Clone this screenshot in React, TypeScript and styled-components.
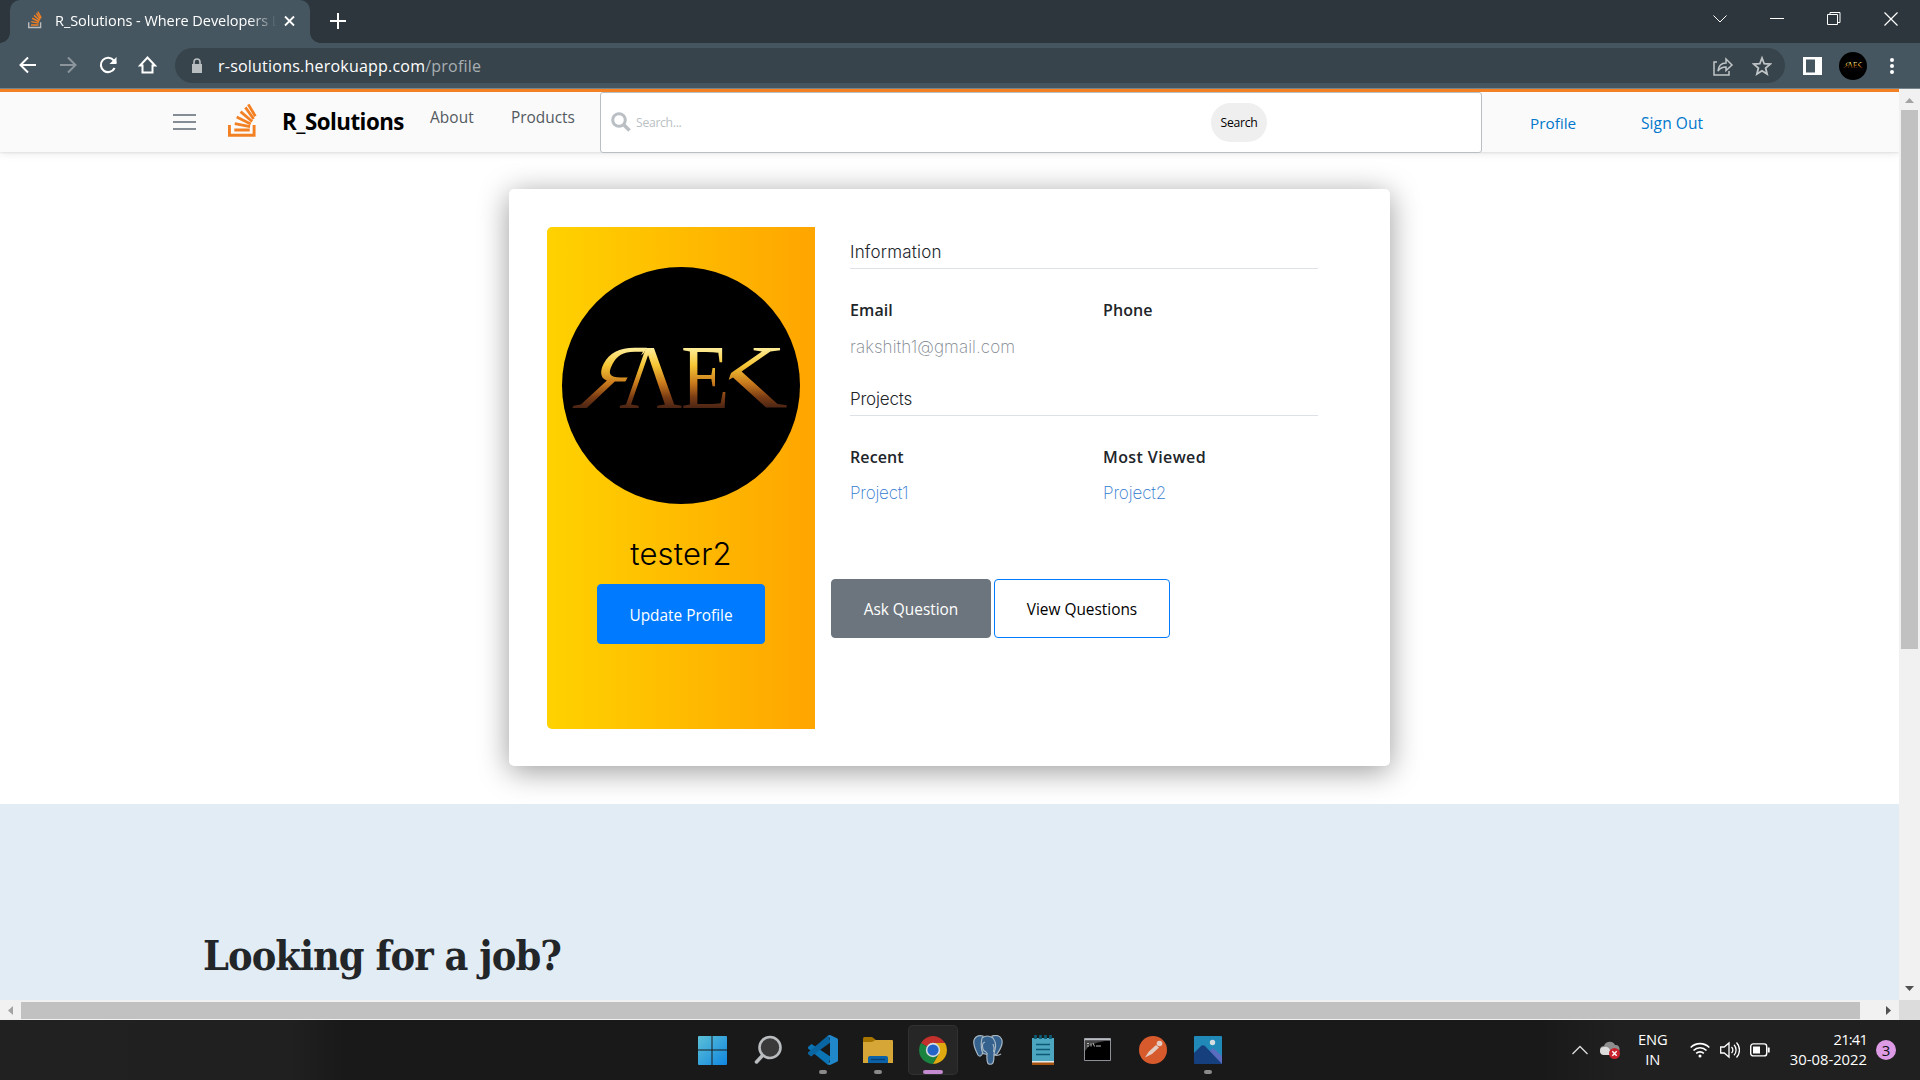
import React from "react";
import styled, { createGlobalStyle } from "styled-components";

const Global = createGlobalStyle`
  *{box-sizing:border-box}
  html,body{margin:0;padding:0}
  body{width:1920px;height:1080px;overflow:hidden;font-family:"Open Sans","Noto Sans",sans-serif;background:#fff}
  svg{display:block;flex:none}
`;

const Screen = styled.div`width:1920px;height:1080px;display:flex;flex-direction:column;overflow:hidden;`;

const Label = styled.span<{ $size: number; $ls?: number; $color?: string; $weight?: number; $family?: string; $gap?: number; $drop?: number }>`
  display:block;flex:none;white-space:pre;
  font-size:${p => p.$size}px;
  line-height:20px;
  letter-spacing:${p => p.$ls ?? 0}px;
  color:${p => p.$color ?? "inherit"};
  font-weight:${p => p.$weight ?? 400};
  font-family:${p => p.$family ?? "inherit"};
  margin-left:${p => p.$gap ?? 0}px;
  margin-top:${p => p.$drop ?? 0}px;
`;

/* browser chrome */
const TabStrip = styled.div`height:43px;flex:none;background:#2c363c;display:flex;`;
const Tab = styled.div`
  position:relative;width:300px;height:43px;margin-left:10px;background:#455660;border-radius:10px 10px 0 0;
  display:flex;padding:11px 15px 0 18px;color:#fff;
  &::before,&::after{content:"";position:absolute;bottom:0;width:10px;height:10px}
  &::before{left:-10px;background:radial-gradient(circle at 0 0,transparent 9.5px,#455660 10px)}
  &::after{right:-10px;background:radial-gradient(circle at 100% 0,transparent 9.5px,#455660 10px)}
`;
const TabTitle = styled.div`
  width:222px;margin-left:13px;
  mask-image:linear-gradient(90deg,#000 194px,transparent 222px);
`;
const TabClose = styled.div`margin:4px 0 0 7px;`;
const NewTab = styled.div`margin:13px 0 0 20px;`;
const WindowControls = styled.div`margin-left:auto;padding:12px 22px 0 0;display:flex;gap:43px;`;

const Toolbar = styled.div`height:46px;flex:none;background:#455660;border-bottom:1px solid #76848b;display:flex;padding-left:18px;`;
const NavIcons = styled.div`display:flex;gap:20px;padding-top:12px;`;
const Omnibox = styled.div`
  width:1610px;height:35px;margin:5px 0 0 17px;border-radius:18px;background:#38444b;color:#fff;
  display:flex;align-items:center;padding:0 13px 0 16px;
`;
const OmniActions = styled.div`margin-left:auto;display:flex;gap:18px;`;
const ToolbarEnd = styled.div`display:flex;align-items:center;height:45px;`;
const MiniAvatar = styled.div`width:28px;height:28px;border-radius:50%;background:#000;margin:0 22px 0 17px;display:flex;align-items:center;justify-content:center;`;

/* page */
const Viewport = styled.div`height:911px;flex:none;display:flex;`;
const Page = styled.div`width:1899px;display:flex;flex-direction:column;overflow:hidden;`;
const Header = styled.header`
  height:63px;flex:none;border-top:3px solid #f48024;background:#fafafa;display:flex;position:relative;
  box-shadow:0 1px 2px rgba(0,0,0,.08),0 2px 8px rgba(0,0,0,.08);
`;
const Burger = styled.div`
  width:23px;margin:22px 0 0 173px;height:16px;display:flex;flex-direction:column;justify-content:space-between;
`;
const BurgerLine = styled.i`height:2px;background:#848d95;`;
const HeaderLogo = styled.div`margin:11px 0 0 32px;width:29px;`;
const Brand = styled.div`width:148px;padding:20px 0 0 25px;`;
const NavLink = styled.div<{ $w: number; $top: number }>`width:${p => p.$w}px;padding-top:${p => p.$top}px;`;
const SearchBox = styled.div`
  width:882px;height:61px;border:1px solid #babfc4;border-radius:3px;background:#fff;
  display:flex;padding-left:10px;flex:none;
`;
const SearchButton = styled.button`
  width:56px;height:39px;margin:10px 0 0 auto;margin-right:214px;border:0;border-radius:20px;background:#efefef;
  padding:0;display:flex;align-items:center;justify-content:center;font-family:inherit;
`;
const SearchGlyph = styled.div`margin-top:19px;`;
const Main = styled.main`height:652px;flex:none;padding:37px 0 0 509px;background:#fff;`;
const Card = styled.section`
  width:881px;height:577px;border-radius:5px;background:#fff;padding:38px;display:flex;
  box-shadow:0 5px 30px rgba(0,0,0,.4);
`;
const Side = styled.div`
  width:268px;height:502px;border-radius:5px 0 0 5px;background:linear-gradient(90deg,#ffd200,#ffa500);
  display:flex;flex-direction:column;align-items:center;padding-top:40px;
`;
const Avatar = styled.div`width:238px;height:237px;border-radius:50%;background:#000;`;
const Name = styled.h3`margin:30px 0 0;height:50px;font:300 31px/39px Inter,sans-serif;letter-spacing:.2px;color:#000;`;
const Button = styled.button<{ $w: number; $h: number; $bg: string; $fg: string; $line?: string }>`
  width:${p => p.$w}px;height:${p => p.$h}px;background:${p => p.$bg};color:${p => p.$fg};
  border:1px solid ${p => p.$line ?? p.$bg};border-radius:4px;padding:2px 0 0;
  display:flex;justify-content:center;align-items:center;font-family:inherit;flex:none;
`;
const Details = styled.div`width:503px;padding:14px 0 0 16px;`;
const Fields = styled.div`padding-left:19px;width:487px;`;
const Heading = styled.div<{ $top?: number }>`height:28px;margin-top:${p => p.$top ?? 0}px;padding-top:1px;border-bottom:1px solid #dee2e6;color:#212529;`;
const Columns = styled.div`display:grid;grid-template-columns:253px 1fr;padding-top:31px;`;
const Actions = styled.div`display:flex;gap:3px;margin-top:75px;`;
const Jobs = styled.section`height:196px;flex:none;background:#e1ecf4;padding:121px 0 0 203px;`;
const JobsTitle = styled.h1`margin:0;font:700 41px/62px "DejaVu Serif Condensed","DejaVu Serif",serif;font-stretch:condensed;letter-spacing:-.95px;color:#232629;white-space:nowrap;`;

const VScroll = styled.div`width:21px;background:#f1f1f1;display:flex;flex-direction:column;align-items:center;padding:9px 0 9px;`;
const VThumb = styled.div`width:17px;height:539px;background:#c1c1c1;margin-top:7px;`;
const HScroll = styled.div`height:20px;flex:none;background:#f1f1f1;display:flex;align-items:center;padding-left:8px;`;
const HThumb = styled.div`width:1839px;height:17px;background:#c1c1c1;margin:1px 26px 0 8px;`;
const Corner = styled.div`width:21px;height:20px;margin-left:auto;background:#dcdcdc;`;
const Push = styled.div`margin-top:auto;`;

/* taskbar */
const Taskbar = styled.footer`
  height:60px;flex:none;background:linear-gradient(90deg,#212121 0,#202020 290px,#191919 345px,#191919 1540px,#202020 1620px);
  display:flex;padding-left:688px;color:#fff;
`;
const TaskItem = styled.div<{ $active?: boolean }>`
  width:50px;height:50px;margin:5px 5px 0 0;border-radius:5px;display:flex;flex-direction:column;align-items:center;
  padding-top:10px;background:${p => (p.$active ? "#262626" : "transparent")};
  box-shadow:${p => (p.$active ? "inset 0 0 0 1px #303030" : "none")};
`;
const Mark = styled.i<{ $active?: boolean }>`
  width:${p => (p.$active ? 20 : 8)}px;height:4px;border-radius:2px;margin-top:5px;background:${p => (p.$active ? "#c58bd0" : "#8a8a8a")};
`;
const Tray = styled.div`margin-left:auto;padding-right:24px;display:flex;align-items:center;`;
const Stack = styled.div<{ $align: string; $gap: number }>`display:flex;flex-direction:column;align-items:${p => p.$align};margin:-2px 0 0 ${p => p.$gap}px;`;
const TrayIcon = styled.div<{ $gap: number }>`margin-left:${p => p.$gap}px;`;
const Count = styled.div`width:20px;height:20px;border-radius:50%;background:#dd9be6;color:#111;display:flex;justify-content:center;margin-left:9px;`;

const StackLogo = ({ w, h, base = "#f48024" }: { w: number; h: number; base?: string }) => (
  <svg width={w} height={h} viewBox="0 0 30 36" preserveAspectRatio="none" fill="none">
    <path d="M1.500 22.500v10.700h25.500V22.500" stroke={base} strokeWidth="3" />
    <g stroke="#f48024" strokeWidth="3">
      <path d="M6.500 27.800h16M7 21.200l15.800 3M9 14.500l14.500 7M13 8.800l12 10.200M18 4.500l8.500 12M21 1.400l7.300 12.200" strokeWidth="2.900" />
    </g>
  </svg>
);

const Monogram = ({ w, h }: { w: number; h: number }) => (
  <svg width={w} height={h} viewBox="0 0 238 238">
    <defs>
      <linearGradient id="gold" gradientUnits="userSpaceOnUse" x1="0" y1="-61" x2="0" y2="0">
        <stop offset="0" stopColor="#fff0a0" /><stop offset=".3" stopColor="#f6c634" />
        <stop offset=".6" stopColor="#c8781c" /><stop offset=".82" stopColor="#7a3c14" /><stop offset="1" stopColor="#4a2414" />
      </linearGradient>
      <clipPath id="bowl"><path d="M-10-70H44V-55L40-50V-26L30 5H-10z" /></clipPath>
      <clipPath id="arms"><path d="M34-70H80V5H34L24-28z" /></clipPath>
    </defs>
    <g fill="url(#gold)" fontFamily="Liberation Serif, serif" fontSize="92">
      <text transform="translate(10 141) skewX(-27) scale(1 1)" clipPath="url(#bowl)">Я</text>
      <text transform="translate(57 141) scale(.95 1)">Λ</text>
      <text transform="translate(119 141) scale(.86 1)">E</text>
      <text transform="translate(133 141) scale(1.400 1)" clipPath="url(#arms)">K</text>
    </g>
  </svg>
);

const ink = { fill: "none", stroke: "#fff" } as const;
const SEMI = { $size: 16, $weight: 600, $color: "#212529", $ls: 0.1 };
const HEAD = { $weight: 300, $family: "Inter,sans-serif", $size: 17 };
const THIN = { $weight: 200, $family: "Inter,sans-serif", $size: 17 };

export default function App() {
  return (
    <Screen>
      <Global />
      <TabStrip>
        <Tab>
          <StackLogo w={14} h={18} base="#bcbbbb" />
          <TabTitle><Label $size={14.5} $ls={-0.05}>R_Solutions - Where Developers L</Label></TabTitle>
          <TabClose><svg width="11" height="12" viewBox="0 0 11 12" {...ink} strokeWidth="1.8"><path d="M1 1.5l9 9M10 1.5l-9 9" /></svg></TabClose>
        </Tab>
        <NewTab><svg width="16" height="16" viewBox="0 0 16 16" {...ink} strokeWidth="2"><path d="M8 0v16M0 8h16" /></svg></NewTab>
        <WindowControls>
          <svg width="14" height="14" viewBox="0 0 14 14" {...ink}><path d="M.5 3.5L7 10l6.500-6.500" /></svg>
          <svg width="14" height="14" viewBox="0 0 14 14" {...ink}><path d="M0 6.500h14" /></svg>
          <svg width="14" height="14" viewBox="0 0 14 14" {...ink}><path d="M.5 2.500h10v10H.5zM3 2.500v-2h10v10h-2.500" /></svg>
          <svg width="14" height="14" viewBox="0 0 14 14" {...ink} strokeWidth="1.200"><path d="M.5.5l13 13M13.500.5l-13 13" /></svg>
        </WindowControls>
      </TabStrip>
      <Toolbar>
        <NavIcons>
          <svg width="20" height="20" viewBox="0 0 20 20" {...ink} strokeWidth="2"><path d="M18 10H3M10 2.500L2.500 10l7.500 7.500" /></svg>
          <svg width="20" height="20" viewBox="0 0 20 20" fill="none" stroke="#8b959b" strokeWidth="2"><path d="M2 10h15M10 2.500l7.500 7.500-7.500 7.500" /></svg>
          <svg width="20" height="20" viewBox="0 0 20 20" {...ink} strokeWidth="2.100"><path d="M16.600 13a7.200 7.200 0 1 1-.7-7.400L18 8" /><path d="M18.500 2v7h-7z" fill="#fff" stroke="none" /></svg>
          <svg width="20" height="20" viewBox="0 0 20 20" {...ink} strokeWidth="2"><path d="M2 10.500h2.500V17.500h10V10.500h2.500L9.500 2.500z" /></svg>
        </NavIcons>
        <Omnibox>
          <svg width="12" height="16" viewBox="0 0 12 16"><path d="M1 6h10v9H1z" fill="#b9bec1" /><path d="M3 6V4a3 3 0 0 1 6 0v2" fill="none" stroke="#b9bec1" strokeWidth="1.600" /></svg>
          <Label $size={16} $ls={0.22} $gap={15}>r-solutions.herokuapp.com</Label>
          <Label $size={16} $ls={0.22} $color="#a8afb3">/profile</Label>
          <OmniActions>
            <svg width="22" height="22" viewBox="0 0 22 22" fill="none" stroke="#c0c5c8" strokeWidth="1.500"><path d="M5 7H2v13h15v-4M6 16c.5-5 3-8 8-8V4l6 6-6 5.500V12c-4 0-6 1-8 4z" /></svg>
            <svg width="20" height="22" viewBox="0 0 20 22" fill="none" stroke="#c0c5c8" strokeWidth="1.800"><path d="M10 3l2.200 5.700 6 .4-4.600 3.900 1.500 6L10 15.700 4.900 19l1.500-6-4.600-3.900 6-.4z" /></svg>
          </OmniActions>
        </Omnibox>
        <ToolbarEnd>
          <TrayIcon $gap={18}><svg width="19" height="18" viewBox="0 0 19 18"><path fill="#fff" fillRule="evenodd" d="M0 0h19v18H0zM3 2.500v13h9v-13z" /></svg></TrayIcon>
          <MiniAvatar><Monogram w={22} h={22} /></MiniAvatar>
          <svg width="6" height="18" viewBox="0 0 6 18" fill="#fff"><circle cx="3" cy="3" r="2" /><circle cx="3" cy="9" r="2" /><circle cx="3" cy="15" r="2" /></svg>
        </ToolbarEnd>
      </Toolbar>

      <Viewport>
        <Page>
          <Header>
            <Burger><BurgerLine /><BurgerLine /><BurgerLine /></Burger>
            <HeaderLogo><StackLogo w={29} h={35} /></HeaderLogo>
            <Brand><Label $size={22.3} $weight={700} $color="#000" $ls={-0.5}>R_Solutions</Label></Brand>
            <NavLink $w={106} $top={16}><Label $size={15.400} $color="#525960" $gap={25} $ls={0.1}>About</Label></NavLink>
            <NavLink $w={89} $top={16}><Label $size={15.400} $color="#525960">Products</Label></NavLink>
            <SearchBox>
              <SearchGlyph><svg width="20" height="20" viewBox="0 0 20 20" fill="none" stroke="#babfc4"><circle cx="8" cy="8" r="6.300" strokeWidth="3" /><path d="M12.500 12.500l6 6" strokeWidth="3.600" /></svg></SearchGlyph>
              <Label $size={12.2} $color="#babfc4" $gap={5} $drop={20} $ls={-0.3}>Search...</Label>
              <SearchButton><Label $size={12.2} $color="#000" $ls={-0.3}>Search</Label></SearchButton>
            </SearchBox>
            <NavLink $w={159} $top={21}><Label $size={15.300} $color="#0077cc" $gap={48}>Profile</Label></NavLink>
            <NavLink $w={90} $top={21}><Label $size={15.500} $color="#0077cc" $ls={0.1}>Sign Out</Label></NavLink>
          </Header>
          <Main>
            <Card>
              <Side>
                <Avatar><Monogram w={238} h={238} /></Avatar>
                <Name>tester2</Name>
                <Button $w={168} $h={60} $bg="#007bff" $fg="#fff"><Label $size={15.400} $drop={2}>Update Profile</Label></Button>
              </Side>
              <Details>
                <Fields>
                  <Heading><Label {...HEAD} $ls={0.2}>Information</Label></Heading>
                  <Columns>
                    <div><Label {...SEMI}>Email</Label><Label {...THIN} $ls={0.1} $color="#7d858d" $drop={17}>rakshith1@gmail.com</Label></div>
                    <div><Label {...SEMI}>Phone</Label></div>
                  </Columns>
                  <Heading $top={31}><Label {...HEAD} $ls={-0.2}>Projects</Label></Heading>
                  <Columns>
                    <div><Label {...SEMI} $ls={0.1}>Recent</Label><Label {...THIN} $ls={-0.2} $color="#2f79cf" $drop={16}>Project1</Label></div>
                    <div><Label {...SEMI} $ls={0.4}>Most Viewed</Label><Label {...THIN} $ls={-0.1} $color="#2f79cf" $drop={16}>Project2</Label></div>
                  </Columns>
                </Fields>
                <Actions style={{ marginTop: 76 }}>
                  <Button $w={160} $h={59} $bg="#6c757d" $fg="#fff"><Label $size={15.400}>Ask Question</Label></Button>
                  <Button $w={176} $h={59} $bg="#fff" $fg="#000" $line="#007bff"><Label $size={15.400}>View Questions</Label></Button>
                </Actions>
              </Details>
            </Card>
          </Main>
          <Jobs><JobsTitle>Looking for a job?</JobsTitle></Jobs>
        </Page>
        <VScroll>
          <svg width="9" height="5" viewBox="0 0 9 5"><path d="M0 5L4.500 0 9 5z" fill="#a3a3a3" /></svg>
          <VThumb />
          <Push><svg width="9" height="5" viewBox="0 0 9 5"><path d="M0 0l4.500 5L9 0z" fill="#505050" /></svg></Push>
        </VScroll>
      </Viewport>
      <HScroll>
        <svg width="5" height="9" viewBox="0 0 5 9"><path d="M5 0L0 4.500 5 9z" fill="#a3a3a3" /></svg>
        <HThumb />
        <svg width="5" height="9" viewBox="0 0 5 9"><path d="M0 0l5 4.500L0 9z" fill="#505050" /></svg>
        <Corner />
      </HScroll>

      <Taskbar>
        <TaskItem>
          <svg width="30" height="30" viewBox="0 0 30 30">
            <defs><linearGradient id="win" x1="0" y1="0" x2="1" y2="1" gradientUnits="objectBoundingBox"><stop offset="0" stopColor="#5cc0d6" /><stop offset="1" stopColor="#1086e0" /></linearGradient></defs>
            <path fill="url(#win)" d="M0 2Q0 1 1 1H13.500V14.500H0zM14.500 1H28Q29 1 29 2V14.500H14.500zM0 15.500H13.500V30H1Q0 30 0 29zM14.500 15.500H29V29Q29 30 28 30H14.500z" />
          </svg>
        </TaskItem>
        <TaskItem>
          <svg width="30" height="30" viewBox="0 0 30 30"><circle cx="17" cy="12.500" r="10.500" fill="#3a3a3a" stroke="#b9bdbf" strokeWidth="2.600" /><path d="M9.500 20.500L3.500 27" stroke="#b9bdbf" strokeWidth="3.500" strokeLinecap="round" /></svg>
        </TaskItem>
        <TaskItem>
          <svg width="30" height="30" viewBox="0 0 30 30">
            <path d="M3.500 9L0 12v1.500L20 30l3-8z" fill="#0b74b5" /><path d="M3 21.500L0 19v-1.500L20 .5 23 7z" fill="#0a66a2" />
            <path d="M22 0l7 3.200q1 .5 1 1.500v20.600q0 1-1 1.500L22 30q-1.500 0-2.500-1.200L22 27V3l-2.500-1.800Q20.500 0 22 0z" fill="#2187cb" />
          </svg>
          <Mark />
        </TaskItem>
        <TaskItem>
          <svg width="30" height="30" viewBox="0 0 30 30">
            <path d="M0 3.500Q0 2 1.500 2H9l4 3v5H0z" fill="#a87400" /><path d="M0 7h9l3.500-2H29q1 0 1 1v22H0z" fill="#d6a737" />
            <path d="M5 28v-5q0-2 2-2h16q2 0 2 2v5z" fill="#0b62a9" /><path d="M8 24.500h14" stroke="#073f75" strokeWidth="1.300" />
          </svg>
          <Mark />
        </TaskItem>
        <TaskItem $active>
          <svg width="30" height="30" viewBox="0 0 30 30">
            <path d="M15 15L2.900 8A14 14 0 0 1 27.100 8z" fill="#c4302b" /><path d="M15 15L2.900 8A14 14 0 0 0 15 29L21 18z" fill="#1b8340" />
            <path d="M15 8H27.100A14 14 0 0 1 15 29L21.100 18.500z" fill="#e0a90f" />
            <circle cx="15" cy="15" r="7.200" fill="#d5dbe0" /><circle cx="15" cy="15" r="5.600" fill="#2464c8" />
          </svg>
          <Mark $active />
        </TaskItem>
        <TaskItem>
          <svg width="30" height="30" viewBox="0 0 30 30">
            <g fill="#34618d" stroke="#a9b8c4" strokeWidth="1.200">
              <path d="M10 1Q4-.5 1.500 4T5 20q2 2.500 4-.5l2-4z" /><path d="M19 1q7-2 9.500 3T24 19l-4 1z" />
              <path d="M9 3q5-4 11 0 3 4 2.500 9L21 19q0 8-1.500 9.500-2.500 1.500-4.500 0-1.500-3-1-9l-4-1q-3-6-1-15.500z" />
              <path d="M12 7q-3 1-2.500 5t3 4.500l2 2.500M20 9q2 4 .5 8M21 20q4 1 7-1" fill="none" />
            </g>
          </svg>
        </TaskItem>
        <TaskItem>
          <svg width="30" height="30" viewBox="0 0 30 30">
            <path d="M4 26h22v4H4z" fill="#a5520f" /><path d="M4 25h22v2.500H4z" fill="#e8e8e8" /><path d="M4 3h22v23H4z" fill="#4ca6bf" />
            <path d="M8 9.500h14M8 14.500h14M8 19.500h14" stroke="#0c5a73" strokeWidth="1.700" />
            <path d="M7.500 0v4M12.500 0v4M17.500 0v4M22.500 0v4" stroke="#0c5a73" strokeWidth="2.800" />
          </svg>
        </TaskItem>
        <TaskItem>
          <svg width="30" height="30" viewBox="0 0 30 30">
            <path d="M1.500 3.500h26v22h-26z" fill="#000" stroke="#8d9096" /><path d="M1.500 4.500h26" stroke="#b9bcc2" strokeWidth="2" />
            <path d="M2 6h20q-16 2-20 10z" fill="#444" /><path d="M4 8.500h2M4 11h2M8 8.500v3M10 8l1.500 3.500M13 11h5" stroke="#bbb" strokeWidth="1" />
          </svg>
        </TaskItem>
        <TaskItem>
          <svg width="30" height="30" viewBox="0 0 30 30"><circle cx="15" cy="15" r="14" fill="#d75a2d" /><circle cx="21.500" cy="8.500" r="2.800" fill="#e3ccc2" /><path d="M18 10l3 2.500-7 6.500-7 3.500 3.500-5.500z" fill="#e3ccc2" /></svg>
        </TaskItem>
        <TaskItem>
          <svg width="30" height="30" viewBox="0 0 30 30">
            <path d="M1 2q0-1 1-1h26q1 0 1 1v26H1z" fill="#2189b8" /><path d="M15 17l5-4 9 8v8H15z" fill="#5a6cc0" />
            <path d="M1 18l7-7q2-1.500 4 0l17 18H2q-1 0-1-1z" fill="#163f7e" /><circle cx="19.500" cy="7.500" r="2.700" fill="#d5dde0" />
          </svg>
          <Mark />
        </TaskItem>
        <Tray>
          <svg width="16" height="10" viewBox="0 0 16 10" fill="none" stroke="#ddd" strokeWidth="1.300"><path d="M.5 9L8 1.500 15.500 9" /></svg>
          <TrayIcon $gap={12}><svg width="20" height="18" viewBox="0 0 20 18"><path d="M4 13a4 4 0 0 1 0-8 6 6 0 0 1 11-1 4 4 0 0 1 1 8z" fill="#8e8e8e" /><path d="M4 14a4 4 0 0 1 0-8q4-1 6 3l3 5z" fill="#dcdcdc" /><circle cx="14.500" cy="12.500" r="5.500" fill="#c8222c" /><path d="M12.300 10.300l4.400 4.400M16.700 10.300l-4.400 4.400" stroke="#fff" strokeWidth="1.400" /></svg></TrayIcon>
          <Stack $align="center" $gap={18}><Label $size={14.700}>ENG</Label><Label $size={14.700}>IN</Label></Stack>
          <TrayIcon $gap={22}><svg width="20" height="16" viewBox="0 0 20 16" {...ink} strokeWidth="1.600"><path d="M.7 5.500a13 13 0 0 1 18.600 0M3.500 8.500a9 9 0 0 1 13 0M6.200 11.400a5.400 5.400 0 0 1 7.600 0" /><circle cx="10" cy="14" r="1.500" fill="#fff" stroke="none" /></svg></TrayIcon>
          <TrayIcon $gap={10}><svg width="20" height="18" viewBox="0 0 20 18" {...ink} strokeWidth="1.300"><path d="M.7 6h3.500L9 2v14l-4.800-4H.7zM11.500 6a4 4 0 0 1 0 6M14 3.800a7.500 7.500 0 0 1 0 10.400M16.500 1.500a11 11 0 0 1 0 15" /></svg></TrayIcon>
          <TrayIcon $gap={10}><svg width="20" height="14" viewBox="0 0 20 14" {...ink} strokeWidth="1.400"><rect x=".7" y=".9" width="16" height="12" rx="2.500" /><path d="M3 3.500h7v7H3z" fill="#fff" stroke="none" /><path d="M18.700 4.500v5" strokeWidth="2" /></svg></TrayIcon>
          <Stack $align="flex-end" $gap={20}><Label $size={14.700} $ls={-0.8}>21:41</Label><Label $size={14.800}>30-08-2022</Label></Stack>
          <Count><Label $size={15}>3</Label></Count>
        </Tray>
      </Taskbar>
    </Screen>
  );
}
